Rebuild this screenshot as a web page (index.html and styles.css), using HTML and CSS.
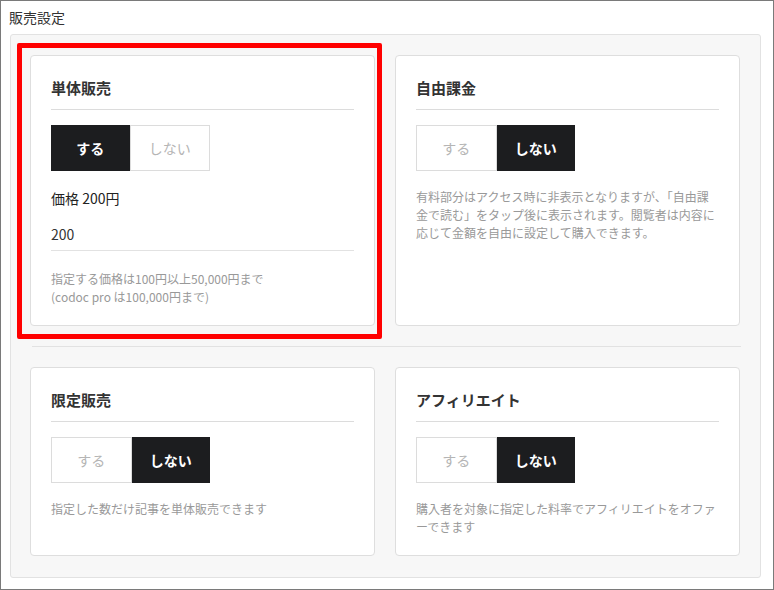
FILE: index.html
```html
<!DOCTYPE html>
<html lang="ja">
<head>
<meta charset="utf-8">
<link rel="stylesheet" href="styles.css">
</head>
<body>
<div class="frame">
  <div class="page-title">販売設定</div>
  <div class="panel">
    <div class="row">
      <div class="card">
        <div class="card-title">単体販売</div>
        <div class="toggle">
          <span class="btn on">する</span>
          <span class="btn off">しない</span>
        </div>
        <div class="price-label">価格 200円</div>
        <div class="price-input">200</div>
        <div class="help">指定する価格は100円以上50,000円まで<br>(codoc pro は100,000円まで)</div>
      </div>
      <div class="card">
        <div class="card-title">自由課金</div>
        <div class="toggle">
          <span class="btn off">する</span>
          <span class="btn on">しない</span>
        </div>
        <div class="desc">有料部分はアクセス時に非表示となりますが、「自由課金で読む」をタップ後に表示されます。閲覧者は内容に応じて金額を自由に設定して購入できます。</div>
      </div>
    </div>
    <div class="sep"></div>
    <div class="row">
      <div class="card">
        <div class="card-title">限定販売</div>
        <div class="toggle">
          <span class="btn off">する</span>
          <span class="btn on">しない</span>
        </div>
        <div class="desc">指定した数だけ記事を単体販売できます</div>
      </div>
      <div class="card">
        <div class="card-title">アフィリエイト</div>
        <div class="toggle">
          <span class="btn off">する</span>
          <span class="btn on">しない</span>
        </div>
        <div class="desc">購入者を対象に指定した料率でアフィリエイトをオファーできます</div>
      </div>
    </div>
    <div class="highlight"></div>
  </div>
</div>
</body>
</html>
```

FILE: styles.css
```css
* { box-sizing: border-box; }
html, body { margin: 0; padding: 0; background: #fff; }
body {
  font-family: "Noto Sans CJK JP", "Noto Sans", sans-serif;
  color: #333;
}
.frame {
  width: 774px;
  height: 590px;
  border: 1px solid #7a7a7a;
  background: #fff;
  padding: 6px 13px 0 9px;
}
.page-title {
  font-size: 14px;
  line-height: 20px;
  color: #333;
  margin-left: -1px;
}
.panel {
  position: relative;
  margin-top: 7px;
  width: 751px;
  height: 544px;
  background: #f7f7f7;
  border: 1px solid #e2e2e2;
  border-radius: 3px;
  padding: 20px 20px 0 19px;
}
.row {
  display: grid;
  grid-template-columns: 345px 345px;
  column-gap: 20px;
}
.sep {
  height: 1px;
  background: #e2e2e2;
  margin: 20px -1px 20px 2px;
}
.card {
  background: #fff;
  border: 1px solid #dedede;
  border-radius: 4px;
  padding: 21px 20px 19px 20px;
}
.card-title {
  font-size: 15px;
  font-weight: 700;
  line-height: 22px;
  color: #333;
  padding-bottom: 10px;
  border-bottom: 1px solid #dcdcdc;
}
.toggle {
  display: flex;
  margin-top: 15px;
  width: 159px;
  height: 46px;
}
.btn {
  flex: 1;
  display: flex;
  align-items: center;
  justify-content: center;
  font-size: 14px;
}
.btn.on {
  background: #1c1d1f;
  color: #fff;
  font-weight: 700;
}
.btn.off {
  background: #fff;
  color: #b5b5b5;
  border: 1px solid #dcdcdc;
}
.price-label {
  margin-top: 17px;
  font-size: 14px;
  line-height: 20px;
  font-weight: 400;
  color: #222;
}
.price-input {
  margin-top: 16px;
  font-size: 14px;
  line-height: 20px;
  color: #333;
  padding-bottom: 6px;
  border-bottom: 1px solid #e2e2e2;
}
.help {
  margin-top: 19px;
  font-size: 12px;
  line-height: 18px;
  color: #999;
}
.desc {
  margin-top: 17px;
  font-size: 12px;
  line-height: 18px;
  color: #999;
}
.highlight {
  position: absolute;
  left: 6px;
  top: 8px;
  width: 365px;
  height: 296px;
  border: 5px solid #f00;
  border-radius: 2px;
  pointer-events: none;
}
```
